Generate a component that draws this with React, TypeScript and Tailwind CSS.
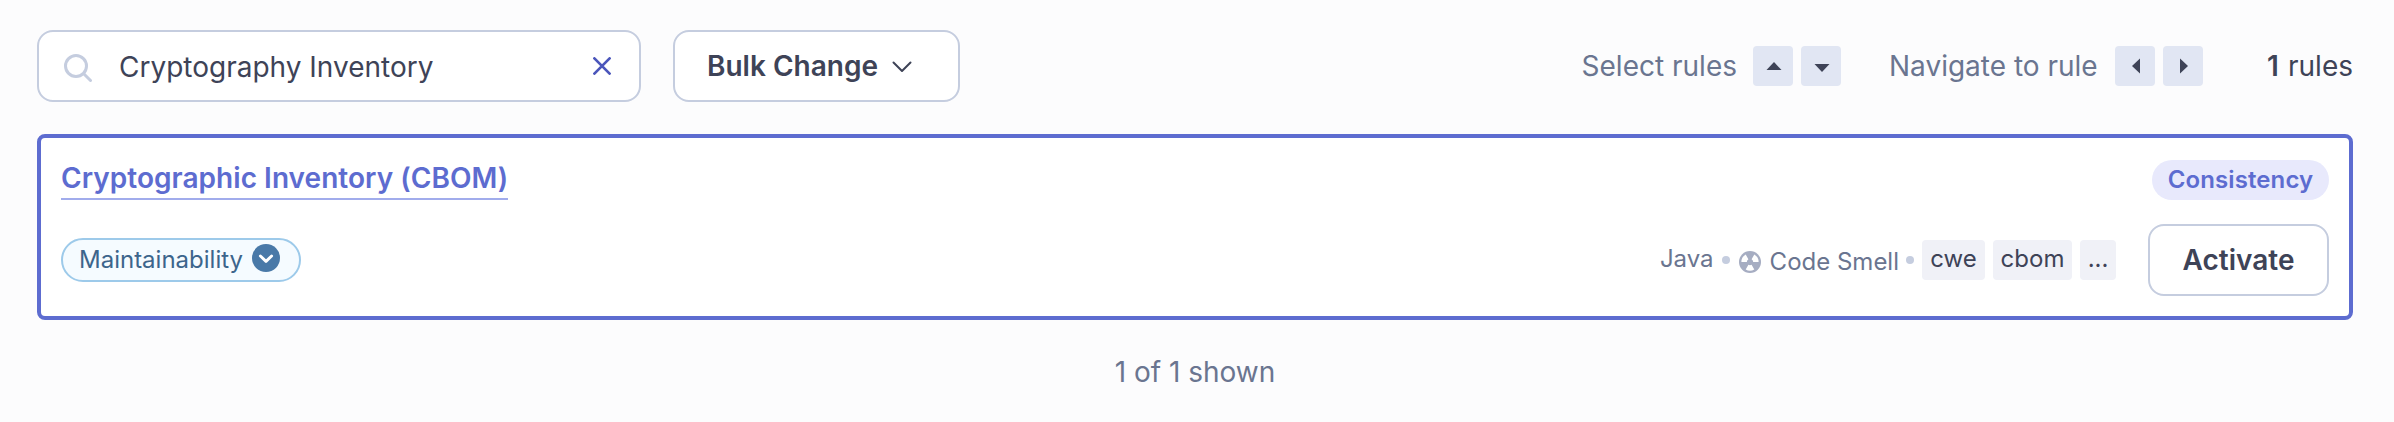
import React from "react";

function ArrowButton({ points, label }: { points: string; label: string }) {
  return (
    <button aria-label={label} className="h-10 w-10 rounded-[4px] bg-[#e1e6f3]">
      <svg viewBox="0 0 40 40" className="h-10 w-10" fill="#3e4357">
        <path d={points} />
      </svg>
    </button>
  );
}

function Dot() {
  return <span className="h-2 w-2 shrink-0 rounded-full bg-[#c5cddf]" />;
}

function Tag({ children, className }: { children: React.ReactNode; className: string }) {
  return (
    <span className={`flex h-10 items-center justify-center rounded-[4px] bg-[#f0f1f7] pb-[2px] text-[24px] leading-[36px] text-[#3e4357] ${className}`}>
      {children}
    </span>
  );
}

export default function App() {
  return (
    <div className="h-[422px] w-full bg-[#fcfcfd] pt-[30px] pl-[37px] pr-[41px] text-[28px] leading-[40px] text-[#3e4357] [font-family:Inter,'Liberation_Sans',sans-serif]">
      <div className="flex h-[72px] items-center">
        <div className="flex h-[72px] w-[604px] items-center rounded-[16px] border-2 border-[#c5cddf] bg-white">
          <svg viewBox="0 0 28 28" className="ml-[25px] mt-[4px] h-7 w-7" fill="none" stroke="#c5cddf" strokeWidth="3" strokeLinecap="round">
            <circle cx="12" cy="12" r="10.5" />
            <path d="M20 20l6.5 6.5" />
          </svg>
          <span className="ml-[27px] grow pt-[2px]">Cryptography Inventory</span>
          <svg viewBox="0 0 18 18" className="mr-[28px] h-[18px] w-[18px]" stroke="#4b56bb" strokeWidth="2.7" strokeLinecap="round">
            <path d="M1.4 1.4l15.2 15.2M16.6 1.4L1.4 16.6" />
          </svg>
        </div>
        <button className="ml-8 flex h-[72px] w-[287px] items-center rounded-[16px] border-2 border-[#c5cddf] bg-white pl-8 font-semibold">
          <span>Bulk Change</span>
          <svg viewBox="0 0 20 12" className="ml-[14px] mt-[2px] h-3 w-5" fill="none" stroke="#3e4357" strokeWidth="2" strokeLinecap="round" strokeLinejoin="round">
            <path d="M1.5 1.5L10 10l8.5-8.5" />
          </svg>
        </button>
        <div className="ml-auto flex items-center text-[#6a7590]">
          <span className="mr-4">Select rules</span>
          <div className="flex gap-2">
            <ArrowButton label="Previous rule" points="M21 16l7.5 8h-15z" />
            <ArrowButton label="Next rule" points="M21 26l-7.5-8h15z" />
          </div>
          <span className="ml-12 mr-4 w-[210px] whitespace-nowrap">Navigate to rule</span>
          <div className="flex gap-2">
            <ArrowButton label="Back" points="M17 20l8-7.5v15z" />
            <ArrowButton label="Open" points="M25 20l-8-7.5v15z" />
          </div>
          <span className="ml-16 flex w-[86px] justify-between text-[#3e4357]">
            <strong className="font-semibold">1</strong> <span>rules</span>
          </span>
        </div>
      </div>

      <div className="mt-8 h-[186px] rounded-[8px] border-4 border-[#5d6cd0] bg-white px-5 pt-[22px]">
        <div className="flex h-10 items-start justify-between">
          <a className="-mt-[2px] h-[42px] w-[447px] whitespace-nowrap border-b-2 border-[#a1acec] font-semibold leading-[40px] tracking-[0.04px] text-[#5d6cd0]">
            Cryptographic Inventory (CBOM)
          </a>
          <span className="flex h-10 w-[177px] items-center justify-center rounded-full bg-[#e8e9fc] text-[24px] font-semibold tracking-[0.1px] text-[#5d6cd0]">
            Consistency
          </span>
        </div>
        <div className="mt-6 flex h-[72px] items-center">
          <div className="flex h-11 w-[240px] items-center rounded-full border-2 border-[#9dcaea] bg-[#f5fbff] pl-4 text-[24px] text-[#3c658c]">
            <span>Maintainability</span>
            <svg viewBox="0 0 28 28" className="mb-1 ml-[9px] h-7 w-7">
              <circle cx="14" cy="14" r="14" fill="#4979a8" />
              <path d="M8.4 12l5.6 5.4 5.6-5.4" fill="none" stroke="#fff" strokeWidth="2.9" strokeLinecap="round" strokeLinejoin="round" />
            </svg>
          </div>
          <div className="ml-auto flex items-center text-[24px] text-[#6a7590]">
            <span className="mr-[8px] pb-[2px] leading-[36px]">Java</span>
            <Dot />
            <svg viewBox="0 0 22 22" className="ml-[9px] mt-1 h-[22px] w-[22px]">
              <circle cx="11" cy="11" r="11" fill="#a6adc2" />
              <path d="M2.4 11A8.6 8.6 0 0 1 6.7 3.55L9.4 8.23A3.2 3.2 0 0 0 7.8 11zM19.6 11A8.6 8.6 0 0 0 15.3 3.55L12.6 8.23A3.2 3.2 0 0 1 14.2 11zM6.7 18.45A8.6 8.6 0 0 0 15.3 18.45L12.6 13.77A3.2 3.2 0 0 1 9.4 13.77z" fill="#fff" />
            </svg>
            <span className="ml-[9px] mr-[7px] pt-[3px]">Code Smell</span>
            <Dot />
            <Tag className="ml-2 w-[63px]">cwe</Tag>
            <Tag className="ml-2 w-[79px]">cbom</Tag>
            <Tag className="ml-2 w-[36px]">...</Tag>
          </div>
          <button className="ml-8 h-[72px] w-[181px] rounded-[16px] border-2 border-[#c5cddf] bg-white font-semibold">
            Activate
          </button>
        </div>
      </div>

      <div className="mt-8 text-center text-[#6a7590]">1 of 1 shown</div>
    </div>
  );
}
